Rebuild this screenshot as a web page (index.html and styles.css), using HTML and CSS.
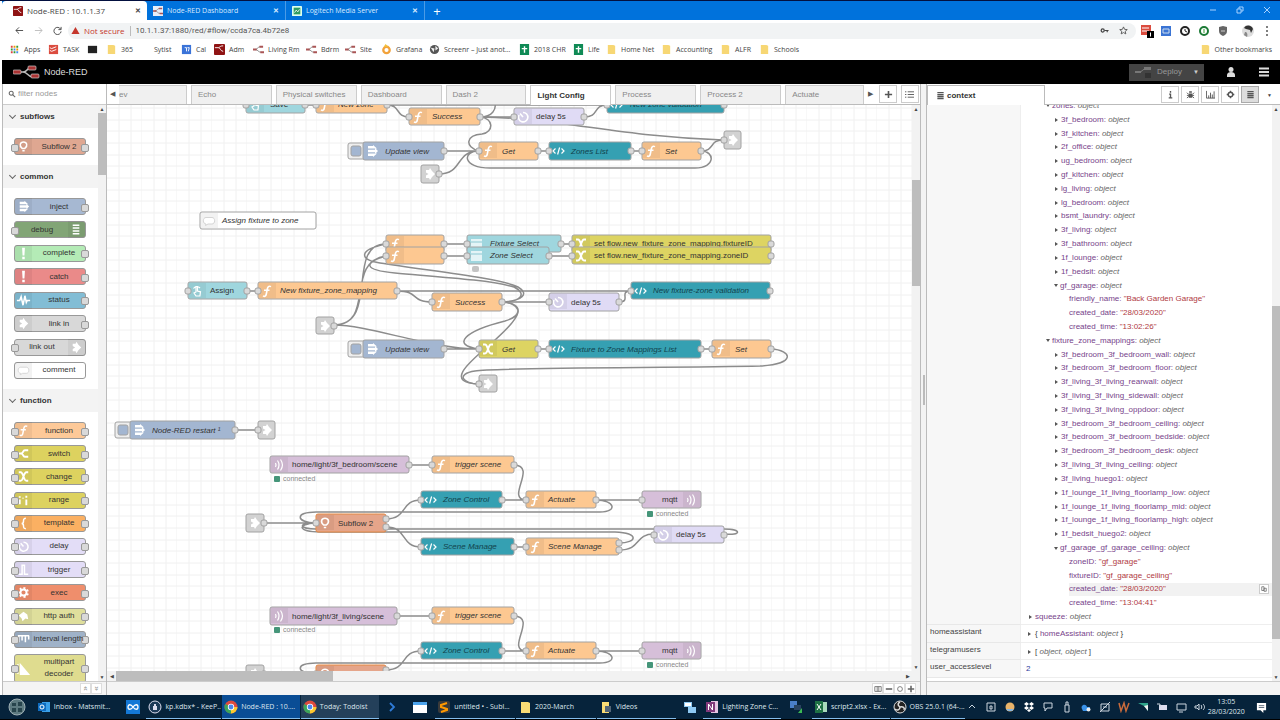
FILE: index.html
```html
<!DOCTYPE html>
<html lang="en">
<head>
<meta charset="utf-8">
<title>Node-RED : 10.1.1.37</title>
<link rel="stylesheet" href="styles.css">
</head>
<body>
<svg class="sprite" aria-hidden="true">
  <defs>
    <symbol id="i-fn" viewBox="0 0 18 18"><path class="s" d="M13 4.600c-2.200-1.100-3.300.1-3.700 2.400L8.300 12c-.4 2.100-1.500 2.900-3.300 1.900M6 8.300h5.500"/></symbol>
    <symbol id="i-tpl" viewBox="0 0 18 18"><path class="s thin" d="M6.500 6.500L4 9l2.500 2.500M12.500 6.500L15 9l-2.500 2.500M10.600 5.500l-2 7"/></symbol>
    <symbol id="i-inject" viewBox="0 0 18 18"><path class="f" d="M5 4h5V3l4 3.500H5zM5 14h5v1l4-3.500H5zM5 7.700h7V6l3 3-3 3v-1.700H5z"/></symbol>
    <symbol id="i-link" viewBox="0 0 18 18"><path class="f" d="M5 5h3l1-2 2 3 3 3-3 3-2 3-1-2H5v-2.500L7.500 9 5 7.500z"/></symbol>
    <symbol id="i-timer" viewBox="0 0 18 18"><path class="s" d="M9 4.500A4.700 4.700 0 1 1 5 7M9 9L6 5.500"/></symbol>
    <symbol id="i-switch" viewBox="0 0 18 18"><path class="s fat" d="M3 9h3.500C9 9 8 5.500 10.500 5.500H14M6.500 9C9 9 8 12.500 10.500 12.500H14"/></symbol>
    <symbol id="i-change" viewBox="0 0 18 18"><path class="s fat" d="M4 4.500h2c3 0 3 9 6 9h2M14 4.500h-2c-3 0-3 9-6 9H4"/></symbol>
    <symbol id="i-range" viewBox="0 0 18 18"><path class="s fat" d="M5 8v5M5 4.500v1.500M12 8v6M12 4v2M8.500 6v1"/></symbol>
    <symbol id="i-brace" viewBox="0 0 18 18"><path class="s" d="M11.500 3.500C9 3.500 9 4.500 9 6.500S8.500 9 7 9c1.500 0 2 .5 2 2.500s0 3 2.500 3"/></symbol>
    <symbol id="i-trigger" viewBox="0 0 18 18"><path class="s" d="M4 14h3.500V4.500H10V14h4"/></symbol>
    <symbol id="i-gear" viewBox="0 0 18 18"><circle class="s fat" cx="9" cy="9" r="3.200"/><path class="s fat" stroke-dasharray="2 2.200" d="M9 4.200a4.800 4.800 0 1 1-.1 0z"/></symbol>
    <symbol id="i-leaf" viewBox="0 0 18 18"><path class="f" d="M4 8l5-4 4 3 1 5-3-1-3 3-1-3z"/></symbol>
    <symbol id="i-ruler" viewBox="0 0 18 18"><path class="s" d="M3 5h12M4 5v7M7.500 5v5M11 5v7M14.500 5v4"/></symbol>
    <symbol id="i-multi" viewBox="0 0 18 18"><path class="f" d="M5 3l11 13H5z"/><path class="s thin" d="M2 5h2M2 8h2M2 11h2M2 14h2"/></symbol>
    <symbol id="i-wave" viewBox="0 0 18 18"><path class="s" d="M2 9h3l1.500-4 2 9 2-10 1.500 7 1-2h3"/></symbol>
    <symbol id="i-bang" viewBox="0 0 18 18"><path class="f" d="M7.500 3h3l-.5 8H8zM7.700 12.500h2.600V15H7.700z"/></symbol>
    <symbol id="i-bars" viewBox="0 0 18 18"><path class="s" d="M5 4.500h7M5 7.500h7M5 10.500h7M5 13.500h7"/></symbol>
    <symbol id="i-comment" viewBox="0 0 18 18"><path d="M6 5.500h6c3.500 0 3.500 6.500 0 6.500H8l-2.500 1.500.5-1.500c-3.500 0-3.500-6.500 0-6.500z" fill="#fff" stroke="#d4d4d4"/></symbol>
    <symbol id="i-bulb" viewBox="0 0 18 18"><path class="s" d="M7.600 11C4 8 5.500 4.200 9 4.200s5 3.800 1.400 6.800zM7.800 13.500h2.400"/></symbol>
    <symbol id="i-touch" viewBox="0 0 18 18"><path class="s thin" d="M8 10V4.500h1.500V9l3 .8-.6 4.200H8l-2-3zM5.500 6.500A4 4 0 0 1 12 6"/></symbol>
    <symbol id="i-list" viewBox="0 0 18 18"><path fill="#e4f4f6" d="M4 4h11v10H4z"/><path fill="#8cc9d2" d="M4 6.500h11v1H4z"/></symbol>
    <symbol id="i-mqtt" viewBox="0 0 18 18"><path class="s thin" d="M7.500 4.500c2 3 2 6 0 9M10.500 3.500c2.500 3.500 2.500 7.500 0 11M5.500 7c.8 1.500.8 2.500 0 4"/></symbol>
    <symbol id="i-nr" viewBox="0 0 12 12"><rect width="12" height="12" rx="1" fill="#8f1313"/><path d="M1 4h4c2 0 2 4 5 4M5 4c2-1 2-2 5-2" fill="none" stroke="#fff"/></symbol>
    <symbol id="i-nrl" viewBox="0 0 12 12"><path d="M2 6c4 0 2-3 6-3M2 6c4 0 3 3 7 3" fill="none" stroke="#888"/><path d="M0 5h4v2H0zM7 2h4v2H7zM8 8h4v2H8z" fill="#a55"/></symbol>
    <symbol id="i-folder" viewBox="0 0 12 12"><path d="M2 1h6l2 1v9H2z" fill="#f7d774"/></symbol>
    <symbol id="i-chrome" viewBox="0 0 14 14"><circle cx="7" cy="7" r="6.500" fill="#dd4b3e"/><path d="M7 7L1.200 4A6.500 6.500 0 0 0 7 13.500l3-5z" fill="#3ba55b"/><path d="M7 7h6.500A6.500 6.500 0 0 1 7 13.500z" fill="#fbc92f"/><circle cx="7" cy="7" r="3.200" fill="#fff"/><circle cx="7" cy="7" r="2.400" fill="#4a88ee"/></symbol>
    <symbol id="i-db" viewBox="0 0 10 10"><path d="M1.500 1h7v1.500h-7zM1.500 3.200h7v1.500h-7zM1.500 5.400h7v1.500h-7zM1.500 7.600h7v1.500h-7z" fill="#555"/></symbol>
    <symbol id="i-sheet" viewBox="0 0 12 12"><path d="M1 0h10v12H1z" fill="#0f8a55"/><path d="M3 5h6M6 2.500v7" stroke="#fff" stroke-width="1.500"/></symbol>
    <rect id="p" class="port" x="-3" y="-3" width="6" height="6" rx="2"/>
    <path id="sh" class="shade" d="M1 1h17v15H1z"/>
    <pattern id="grid" width="35" height="35" patternUnits="userSpaceOnUse"><path d="M12 0v35M24 0v35M35 0v35M0 3h35M0 15h35M0 26h35" fill="none" stroke="#f0f0f0"/></pattern>
  </defs>
</svg>

<div class="tabstrip">
  <button class="btab active"><svg><use href="#i-nr"/></svg><span>Node-RED : 10.1.1.37</span><b>✕</b></button>
  <button class="btab"><svg><rect width="12" height="12" fill="#e8eef8"/><use href="#i-nrl"/></svg><span>Node-RED Dashboard</span><b>✕</b></button>
  <button class="btab"><svg viewBox="0 0 12 12"><rect width="12" height="12" rx="1" fill="#dfe"/><path d="M2 2h8v8H2z" fill="#2f9c62"/><path d="M3 8l2-3 2 2 2-3" stroke="#fff" fill="none"/></svg><span>Logitech Media Server</span><b>✕</b></button>
  <button class="newtab" aria-label="New tab">+</button>
  <span class="grow"></span>
  <span class="winbtns"><button aria-label="Minimise"><svg viewBox="0 0 8 8"><path d="M1 4h6"/></svg></button><button aria-label="Restore"><svg viewBox="0 0 8 8"><path d="M1 3h4v4H1zM3 3V1h4v4H5"/></svg></button><button aria-label="Close"><svg viewBox="0 0 8 8"><path d="M1 1l6 6M7 1L1 7"/></svg></button></span>
</div>

<div class="toolbar">
  <button aria-label="Back"><svg viewBox="0 0 10 10"><path d="M9 5H1M4.500 1.500L1 5l3.500 3.500"/></svg></button>
  <button aria-label="Forward" class="dim"><svg viewBox="0 0 10 10"><path d="M1 5h8M5.500 1.500L9 5 5.500 8.500"/></svg></button>
  <button aria-label="Reload"><svg viewBox="0 0 10 10"><path d="M8.500 3.500A4 4 0 1 0 9 6M9 1v3H6"/></svg></button>
  <div class="omnibox">
    <svg class="warn" viewBox="0 0 10 10"><path d="M5 1l4.500 8h-9z" fill="#c5372c"/></svg>
    <span class="notsecure">Not secure</span>
    <input aria-label="Address" value="10.1.1.37:1880/red/#flow/ccda7ca.4b72e8">
    <svg class="key" viewBox="0 0 10 10"><circle cx="3" cy="5" r="1.700" fill="none" stroke="#444" stroke-width="1.400"/><path d="M5 5h4.500M8 5v2" stroke="#444" stroke-width="1.300"/></svg>
    <svg class="star" viewBox="0 0 10 10"><path d="M5 1l1.200 2.700 3 .3-2.300 1.900.7 2.900L5 7.300 2.400 8.800l.7-2.900L.8 4l3-.3z" fill="none" stroke="#555"/></svg>
  </div>
  <div class="exts">
    <svg viewBox="0 0 14 14"><path d="M1 1h10v10H1z" fill="#db4c3f"/><path d="M2 4h7M2 7h7" stroke="#fff"/><path d="M7 7h7v7H7z"/><path d="M10.500 8.500v4" stroke="#fff"/></svg>
    <svg viewBox="0 0 14 14"><path d="M2 2h10v10H2z" fill="#3b74d4"/><path d="M4 5h6v4H4z" fill="none" stroke="#cde"/></svg>
    <svg viewBox="0 0 14 14"><circle cx="7" cy="7" r="4" fill="#fff" stroke="#222" stroke-width="2"/><path d="M7 5v2l2 1" stroke="#222" fill="none"/></svg>
    <svg viewBox="0 0 14 14"><circle cx="7" cy="7" r="4" fill="#fff" stroke="#1c7a35" stroke-width="2"/><path d="M6 5h2v4H6z" fill="#9c9"/></svg>
    <svg viewBox="0 0 14 14"><path d="M3 3l4-1 4 1v4c0 3-2 4-4 5-2-1-4-2-4-5z" fill="#666"/><path d="M5 7h4" stroke="#ccc"/></svg>
    <svg class="avatar" viewBox="0 0 14 14"><circle cx="7" cy="7" r="6" fill="#ddd"/><path d="M3 4c2-4 8-3 9 1l-2 4-1-3-4-1z" fill="#333"/><path d="M4 8c2 0 3 2 2 5L3 11z" fill="#888"/></svg>
    <svg viewBox="0 0 14 14"><path d="M7 2v2M7 6v2M7 10v2" stroke="#555" stroke-width="1.500"/></svg>
  </div>
</div>

<nav class="bookmarks">
  <a href="#" class="w39"><svg viewBox="0 0 12 12"><path d="M2 2h2v2H2zM2 8h2v2H2z" fill="#d44"/><path d="M5 2h2v2H5zM8 5h2v2H8z" fill="#e90"/><path d="M8 2h2v2H8zM2 5h2v2H2zM5 8h2v2H5z" fill="#393"/><path d="M5 5h2v2H5zM8 8h2v2H8z" fill="#48e"/></svg>Apps</a>
  <a href="#" class="w39"><svg viewBox="0 0 12 12"><path d="M1 1h10v10H1z" fill="#db4c3f"/><path d="M2 4l2 1 5-2M2 7l2 1 5-2" stroke="#fff" fill="none"/></svg>TASK</a>
  <a href="#" class="w19" aria-label="Terminal"><svg viewBox="0 0 12 12"><path d="M1 2h10v8H1z" fill="#222"/></svg></a>
  <a href="#" class="w48"><svg><use href="#i-folder"/></svg>365</a>
  <a href="#" class="w27">Sytist</a>
  <a href="#" class="w33"><svg viewBox="0 0 12 12"><path d="M1 1h10v10H1z" fill="#3a73d8"/><path d="M4 4h2v4M7 4h2L8 8" stroke="#fff" fill="none"/></svg>Cal</a>
  <a href="#" class="w39"><svg><use href="#i-nr"/></svg>Adm</a>
  <a href="#" class="w53"><svg><use href="#i-nrl"/></svg>Living Rm</a>
  <a href="#" class="w39"><svg><use href="#i-nrl"/></svg>Bdrm</a>
  <a href="#" class="w36"><svg><use href="#i-nrl"/></svg>Site</a>
  <a href="#" class="w48"><svg viewBox="0 0 12 12"><circle cx="6" cy="6.500" r="3.500" fill="none" stroke="#f2a23a" stroke-width="2.500"/><path d="M5 0l3 3H3z" fill="#f2c23a"/></svg>Grafana</a>
  <a href="#" class="w90"><svg viewBox="0 0 12 12"><circle cx="6" cy="6" r="5" fill="#555"/><path d="M2 4l4 1-1 4zM7 2l3 3-3 2z" fill="#eee"/></svg>Screenr – Just anot...</a>
  <a href="#" class="w54"><svg><use href="#i-sheet"/></svg>2018 CHR</a>
  <a href="#" class="w33"><svg><use href="#i-sheet"/></svg>Life</a>
  <a href="#" class="w55"><svg><use href="#i-folder"/></svg>Home Net</a>
  <a href="#" class="w59"><svg><use href="#i-folder"/></svg>Accounting</a>
  <a href="#" class="w39"><svg><use href="#i-folder"/></svg>ALFR</a>
  <a href="#"><svg><use href="#i-folder"/></svg>Schools</a>
  <span class="grow"></span>
  <a href="#"><svg><use href="#i-folder"/></svg>Other bookmarks</a>
</nav>

<header class="nrhead">
  <svg class="logo" viewBox="0 0 27 14"><path d="M4 7h6c5 0 3-4 8-4M10 7c5 0 4 5 10 5" fill="none" stroke="#bbb" stroke-width="1.500"/><g fill="#a33" stroke="#ccc" stroke-width=".7"><rect x="0" y="5" width="8" height="4" rx="1"/><rect x="15" y="1" width="8" height="4" rx="1"/><rect x="18" y="9" width="8" height="4" rx="1"/></g></svg>
  <span class="brand">Node-RED</span>
  <span class="grow"></span>
  <button class="deploy"><svg viewBox="0 0 18 12"><path d="M4 6c5 0 4-3 8-3" fill="none" stroke="#888"/><path d="M1 5h6v2H1zM10 1h7v3h-7z" fill="#777"/><path d="M11 7h6v5h-6z" fill="#333"/></svg>Deploy<i>▼</i></button>
  <button class="hbtn" aria-label="User"><svg viewBox="0 0 10 12"><circle cx="5" cy="3.500" r="2.500"/><path d="M1 11V9c0-4 8-4 8 0v2z"/></svg></button>
  <button class="hbtn" aria-label="Menu"><svg viewBox="0 0 12 12"><path d="M1 1.500h10v2H1zM1 5h10v2H1zM1 8.500h10v2H1z"/></svg></button>
</header>

<main class="editor">
  <aside class="palette">
    <div class="search"><svg viewBox="0 0 10 10"><circle cx="4" cy="4" r="2.500" fill="none" stroke="#666" stroke-width="1.300"/><path d="M6 6l3 3" stroke="#666" stroke-width="1.300"/></svg><input aria-label="filter nodes" placeholder="filter nodes"></div>
    <div class="palbody">
      <div class="cats">
        <h2>subflows</h2>
        <ul class="one"><li class="subflow in out"><svg><use href="#i-bulb"/></svg><span>Subflow 2</span></li></ul>
        <h2>common</h2>
        <ul class="common">
          <li class="inject out"><svg><use href="#i-inject"/></svg><span>inject</span></li>
          <li class="debug in rev"><svg><use href="#i-bars"/></svg><span>debug</span></li>
          <li class="complete out"><svg><use href="#i-bang"/></svg><span>complete</span></li>
          <li class="catch out"><svg><use href="#i-bang"/></svg><span>catch</span></li>
          <li class="status out"><svg><use href="#i-wave"/></svg><span>status</span></li>
          <li class="link out"><svg><use href="#i-link"/></svg><span>link in</span></li>
          <li class="link in rev"><svg><use href="#i-link"/></svg><span>link out</span></li>
          <li class="comment"><svg><use href="#i-comment"/></svg><span>comment</span></li>
        </ul>
        <h2>function</h2>
        <ul class="function">
          <li class="fn in out"><svg><use href="#i-fn"/></svg><span>function</span></li>
          <li class="change in out"><svg><use href="#i-switch"/></svg><span>switch</span></li>
          <li class="change in out"><svg><use href="#i-change"/></svg><span>change</span></li>
          <li class="change in out"><svg><use href="#i-range"/></svg><span>range</span></li>
          <li class="template in out"><svg><use href="#i-brace"/></svg><span>template</span></li>
          <li class="delay in out"><svg><use href="#i-timer"/></svg><span>delay</span></li>
          <li class="delay in out"><svg><use href="#i-trigger"/></svg><span>trigger</span></li>
          <li class="exec in out"><svg><use href="#i-gear"/></svg><span>exec</span></li>
          <li class="auth in out"><svg><use href="#i-leaf"/></svg><span>http auth</span></li>
          <li class="interval in out"><svg><use href="#i-ruler"/></svg><span>interval length</span></li>
          <li class="multi in out"><svg><use href="#i-multi"/></svg><span>multipart decoder</span></li>
        </ul>
      </div>
      <div class="vscroll"><i>▲</i><b class="t-pal"></b><i>▼</i></div>
    </div>
    <div class="foot end"><button aria-label="Collapse all">«</button><button aria-label="Expand all">»</button></div>
  </aside>

  <section class="workspace">
    <div class="wtabs">
      <button class="arrow" aria-label="Scroll left">◀</button>
      <button class="wtab first">ev</button><button class="wtab">Echo</button><button class="wtab">Physical switches</button><button class="wtab">Dashboard</button><button class="wtab">Dash 2</button><button class="wtab on">Light Config</button><button class="wtab">Process</button><button class="wtab">Process 2</button><button class="wtab last">Actuate</button>
      <button class="arrow r" aria-label="Scroll right">▶</button>
      <button class="sq" aria-label="Add flow"><svg viewBox="0 0 10 10"><path d="M1 5h8M5 1v8" stroke="#555" stroke-width="1.800"/></svg></button>
      <button class="sq" aria-label="List flows"><svg viewBox="0 0 10 10"><path d="M0 2h1.500M3 2h7M0 5h1.500M3 5h7M0 8h1.500M3 8h7" stroke="#555"/></svg></button>
    </div>
    <div class="canvaswrap">
      <svg class="canvas" role="img" aria-label="Light Config flow">
        <rect width="100%" height="100%" fill="url(#grid)"/>
        <g transform="translate(-107 -105)">
          <g class="wires">
            <path d="M305 105H316M387 105H607M387 105C401 105 395 117 409 117M480 117H514M480 117C492 117 497 110 495 100"/>
            <path d="M480 117C494 118 494 132 482 134C466 135 464 147 479 151M480 117C560 118 620 137 723 140M584 117C600 117 592 105 607 105"/>
            <path d="M444 151H479M439 174C463 174 455 151 479 151M538 151H549M631 151H642M701 151C715 151 709 140 723 140M701 151C715 151 716 168 695 168H490C462 168 462 151 479 151"/>
            <path d="M247 291H258M397 291H631M397 291C420 291 410 302 432 302M502 302H549M619 302C632 302 618 291 631 291M444 244H467M444 256H467M561 244H572M549 256H572"/>
            <path d="M334 325C380 325 345 244 386 244M334 325C376 325 344 262 386 256M386 244C357 250 360 260 380 263C430 271 500 278 518 287C530 294 522 301 502 302M386 256C364 262 362 270 395 273C440 277 490 280 514 287C528 294 520 302 502 302"/>
            <path d="M502 302C526 304 523 315 495 340C475 358 440 383 479 384M502 302C520 303 525 315 505 321C465 331 450 345 479 349M334 325C370 325 430 349 479 349M444 349H479M538 349H549M701 349H712"/>
            <path d="M771 349C792 350 797 364 760 366C680 368 500 367 475 371C455 374 463 384 479 384M235 430H258M397 616H409"/>
            <g id="scene-wires"><path d="M409 465H432M514 465C538 466 505 499 526 500M502 500H526M596 500H642M596 500C615 500 618 512 600 512H316C295 512 295 522 316 523M264 523H316M386 519C408 519 400 500 421 500M386 527C408 527 400 547 421 547M514 547H526M619 543C637 543 640 533 615 532H320C298 532 296 524 316 523M724 534C742 536 742 529 724 529H316C300 529 296 523 316 523M619 550C642 550 634 534 654 534"/></g>
            <use href="#scene-wires" y="151"/>
          </g>

          <g class="node ui" transform="translate(246 96)"><rect class="box" width="59" height="17" rx="2"/><use href="#sh"/><use href="#i-touch" width="18" height="18"/><text x="24" y="11">Save</text><use href="#p" y="9"/><use href="#p" x="59" y="9"/></g>
          <g class="node fn it" transform="translate(316 96)"><rect class="box" width="71" height="17" rx="2"/><use href="#sh"/><use href="#i-fn" width="18" height="18"/><text x="22" y="11">New zone</text><use href="#p" y="9"/><use href="#p" x="71" y="9"/></g>
          <g class="node fn it" transform="translate(409 108)"><rect class="box" width="71" height="17" rx="2"/><use href="#sh"/><use href="#i-fn" width="18" height="18"/><text x="23" y="11">Success</text><use href="#p" y="9"/><use href="#p" x="71" y="9"/></g>
          <g class="node delay" transform="translate(514 108)"><rect class="box" width="70" height="17" rx="2"/><use href="#sh"/><use href="#i-timer" width="18" height="18"/><text x="22" y="11">delay 5s</text><use href="#p" y="9"/><use href="#p" x="70" y="9"/></g>
          <g class="node tpl it" transform="translate(607 96)"><rect class="box" width="117" height="17" rx="2"/><use href="#i-tpl" width="18" height="18"/><text x="23" y="11">New zone validation</text><use href="#p" y="9"/><use href="#p" x="117" y="9"/></g>
          <g class="node link" transform="translate(724 131)"><rect class="box" width="17" height="18" rx="2"/><use href="#i-link" width="18" height="18"/><use href="#p" y="9"/></g>

          <g class="node inject it" transform="translate(363 142)"><rect class="tray" x="-15" y="1" width="20" height="16" rx="2"/><rect class="box" x="-12" y="4" width="10" height="10" rx="2"/><rect class="box" width="81" height="18" rx="2"/><use href="#i-inject" width="18" height="18"/><text x="22" y="12">Update view</text><use href="#p" x="81" y="9"/></g>
          <g class="node fn it" transform="translate(479 142)"><rect class="box" width="59" height="18" rx="2"/><use href="#sh"/><use href="#i-fn" width="18" height="18"/><text x="23" y="12">Get</text><use href="#p" y="9"/><use href="#p" x="59" y="9"/></g>
          <g class="node tpl it" transform="translate(549 142)"><rect class="box" width="82" height="18" rx="2"/><use href="#i-tpl" width="18" height="18"/><text x="22" y="12">Zones List</text><use href="#p" y="9"/><use href="#p" x="82" y="9"/></g>
          <g class="node fn it" transform="translate(642 142)"><rect class="box" width="59" height="18" rx="2"/><use href="#sh"/><use href="#i-fn" width="18" height="18"/><text x="23" y="12">Set</text><use href="#p" y="9"/><use href="#p" x="59" y="9"/></g>
          <g class="node link" transform="translate(421 165)"><rect class="box" width="18" height="18" rx="2"/><use href="#i-link" width="18" height="18"/><use href="#p" x="18" y="9"/></g>
          <g class="node comment it" transform="translate(200 212)"><rect class="box" width="116" height="17" rx="2"/><use href="#sh"/><use href="#i-comment" width="18" height="18"/><text x="22" y="11">Assign fixture to zone</text></g>

          <g class="node fn" transform="translate(386 235)"><rect class="box" width="58" height="17" rx="2"/><use href="#sh"/><use href="#i-fn" width="18" height="18"/><use href="#p" y="9"/><use href="#p" x="58" y="9"/></g>
          <g class="node fn" transform="translate(386 247)"><rect class="box" width="58" height="17" rx="2"/><use href="#sh"/><use href="#i-fn" width="18" height="18"/><use href="#p" y="9"/><use href="#p" x="58" y="9"/></g>
          <g class="node ui it" transform="translate(467 235)"><rect class="box" width="94" height="17" rx="2"/><use href="#i-list" width="18" height="18"/><text x="23" y="11">Fixture Select</text><use href="#p" y="9"/><use href="#p" x="94" y="9"/></g>
          <g class="node ui it" transform="translate(467 247)"><rect class="box" width="82" height="17" rx="2"/><use href="#i-list" width="18" height="18"/><text x="23" y="11">Zone Select</text><use href="#p" y="9"/><use href="#p" x="82" y="9"/></g>
          <rect x="472" y="266" width="7" height="6" rx="2" fill="#c4c4c4"/>
          <g class="node change" transform="translate(572 235)"><rect class="box" width="199" height="17" rx="2"/><use href="#sh"/><use href="#i-change" width="18" height="18"/><text x="22" y="11">set flow.new_fixture_zone_mapping.fixtureID</text><use href="#p" y="9"/><use href="#p" x="199" y="9"/></g>
          <g class="node change" transform="translate(572 247)"><rect class="box" width="199" height="17" rx="2"/><use href="#sh"/><use href="#i-change" width="18" height="18"/><text x="22" y="11">set flow.new_fixture_zone_mapping.zoneID</text><use href="#p" y="9"/><use href="#p" x="199" y="9"/></g>

          <g class="node ui" transform="translate(188 282)"><rect class="box" width="59" height="17" rx="2"/><use href="#sh"/><use href="#i-touch" width="18" height="18"/><text x="22" y="11">Assign</text><use href="#p" y="9"/><use href="#p" x="59" y="9"/></g>
          <g class="node fn it" transform="translate(258 282)"><rect class="box" width="139" height="17" rx="2"/><use href="#sh"/><use href="#i-fn" width="18" height="18"/><text x="22" y="11">New fixture_zone_mapping</text><use href="#p" y="9"/><use href="#p" x="139" y="9"/></g>
          <g class="node fn it" transform="translate(432 293)"><rect class="box" width="70" height="18" rx="2"/><use href="#sh"/><use href="#i-fn" width="18" height="18"/><text x="23" y="12">Success</text><use href="#p" y="9"/><use href="#p" x="70" y="9"/></g>
          <g class="node delay" transform="translate(549 293)"><rect class="box" width="70" height="18" rx="2"/><use href="#sh"/><use href="#i-timer" width="18" height="18"/><text x="22" y="12">delay 5s</text><use href="#p" y="9"/><use href="#p" x="70" y="9"/></g>
          <g class="node tpl it" transform="translate(631 282)"><rect class="box" width="139" height="17" rx="2"/><use href="#i-tpl" width="18" height="18"/><text x="22" y="11">New fixture-zone validation</text><use href="#p" y="9"/><use href="#p" x="139" y="9"/></g>
          <g class="node link" transform="translate(316 317)"><rect class="box" width="18" height="17" rx="2"/><use href="#i-link" width="18" height="18"/><use href="#p" x="18" y="9"/></g>

          <g class="node inject it" transform="translate(363 340)"><rect class="tray" x="-15" y="1" width="20" height="16" rx="2"/><rect class="box" x="-12" y="4" width="10" height="10" rx="2"/><rect class="box" width="81" height="18" rx="2"/><use href="#i-inject" width="18" height="18"/><text x="22" y="12">Update view</text><use href="#p" x="81" y="9"/></g>
          <g class="node change it" transform="translate(479 340)"><rect class="box" width="59" height="18" rx="2"/><use href="#sh"/><use href="#i-change" width="18" height="18"/><text x="23" y="12">Get</text><use href="#p" y="9"/><use href="#p" x="59" y="9"/></g>
          <g class="node tpl it" transform="translate(549 340)"><rect class="box" width="152" height="18" rx="2"/><use href="#i-tpl" width="18" height="18"/><text x="22" y="12">Fixture to Zone Mappings List</text><use href="#p" y="9"/><use href="#p" x="152" y="9"/></g>
          <g class="node fn it" transform="translate(712 340)"><rect class="box" width="59" height="18" rx="2"/><use href="#sh"/><use href="#i-fn" width="18" height="18"/><text x="23" y="12">Set</text><use href="#p" y="9"/><use href="#p" x="59" y="9"/></g>
          <g class="node link" transform="translate(479 375)"><rect class="box" width="18" height="17" rx="2"/><use href="#i-link" width="18" height="18"/><use href="#p" y="9"/></g>

          <g class="node inject it" transform="translate(130 421)"><rect class="tray" x="-15" y="1" width="20" height="16" rx="2"/><rect class="box" x="-12" y="4" width="10" height="10" rx="2"/><rect class="box" width="105" height="18" rx="2"/><use href="#i-inject" width="18" height="18"/><text x="22" y="12">Node-RED restart ¹</text><use href="#p" x="105" y="9"/></g>
          <g class="node link" transform="translate(258 421)"><rect class="box" width="17" height="18" rx="2"/><use href="#i-link" width="18" height="18"/><use href="#p" y="9"/></g>

          <g class="node mqtt" transform="translate(270 456)"><rect class="box" width="139" height="17" rx="2"/><use href="#sh"/><use href="#i-mqtt" width="18" height="18"/><text x="22" y="11">home/light/3f_bedroom/scene</text><use href="#p" x="139" y="9"/></g>
          <g class="node mqtt" transform="translate(270 607)"><rect class="box" width="127" height="18" rx="2"/><use href="#sh"/><use href="#i-mqtt" width="18" height="18"/><text x="22" y="12">home/light/3f_living/scene</text><use href="#p" x="127" y="9"/></g>
          <g id="scene">
            <g class="stat"><rect x="274" y="476" width="6" height="6" rx="1"/><text x="283" y="481">connected</text><rect x="647" y="511" width="6" height="6" rx="1"/><text x="656" y="516">connected</text></g>
            <g class="node fn it" transform="translate(432 456)"><rect class="box" width="82" height="17" rx="2"/><use href="#sh"/><use href="#i-fn" width="18" height="18"/><text x="23" y="11">trigger scene</text><use href="#p" y="9"/><use href="#p" x="82" y="9"/></g>
            <g class="node tpl it" transform="translate(421 491)"><rect class="box" width="81" height="17" rx="2"/><use href="#i-tpl" width="18" height="18"/><text x="22" y="11">Zone Control</text><use href="#p" y="9"/><use href="#p" x="81" y="9"/></g>
            <g class="node fn it" transform="translate(526 491)"><rect class="box" width="70" height="17" rx="2"/><use href="#sh"/><use href="#i-fn" width="18" height="18"/><text x="22" y="11">Actuate</text><use href="#p" y="9"/><use href="#p" x="70" y="9"/></g>
            <g class="node mqtt" transform="translate(642 491)"><rect class="box" width="59" height="17" rx="2"/><use href="#sh" x="40"/><use href="#i-mqtt" x="40" width="18" height="18"/><text x="20" y="11">mqtt</text><use href="#p" y="9"/></g>
            <g class="node link" transform="translate(246 514)"><rect class="box" width="18" height="18" rx="2"/><use href="#i-link" width="18" height="18"/><use href="#p" x="18" y="9"/></g>
            <g class="node subflow" transform="translate(316 514)"><rect class="box" width="70" height="18" rx="2"/><use href="#sh"/><use href="#i-bulb" width="18" height="18"/><text x="22" y="12">Subflow 2</text><use href="#p" y="9"/><use href="#p" x="70" y="5"/><use href="#p" x="70" y="13"/></g>
            <g class="node tpl it" transform="translate(421 538)"><rect class="box" width="93" height="17" rx="2"/><use href="#i-tpl" width="18" height="18"/><text x="22" y="11">Scene Manage</text><use href="#p" y="9"/><use href="#p" x="93" y="9"/></g>
            <g class="node fn it" transform="translate(526 538)"><rect class="box" width="93" height="17" rx="2"/><use href="#sh"/><use href="#i-fn" width="18" height="18"/><text x="22" y="11">Scene Manage</text><use href="#p" y="9"/><use href="#p" x="93" y="5"/><use href="#p" x="93" y="12"/></g>
            <g class="node delay" transform="translate(654 526)"><rect class="box" width="70" height="17" rx="2"/><use href="#sh"/><use href="#i-timer" width="18" height="18"/><text x="22" y="11">delay 5s</text><use href="#p" y="9"/><use href="#p" x="70" y="9"/></g>
          </g>
          <use href="#scene" y="151"/>
        </g>
      </svg>
      <div class="vscroll"><i>▲</i><b class="t-ws"></b><i>▼</i></div>
    </div>
    <div class="hscroll"><i>◀</i><b></b><span class="grow"></span><i>▶</i></div>
    <div class="foot end"><button aria-label="Navigator"><svg viewBox="0 0 10 10"><path d="M1 2h8v6H1zM4 2v6M6 2v6"/></svg></button><button aria-label="Zoom out"><svg viewBox="0 0 10 10"><path d="M1 5h8" stroke-width="2"/></svg></button><button aria-label="Reset zoom"><svg viewBox="0 0 10 10"><circle cx="5" cy="5" r="3"/></svg></button><button aria-label="Zoom in"><svg viewBox="0 0 10 10"><path d="M1 5h8M5 1v8" stroke-width="2"/></svg></button></div>
  </section>

  <div class="splitter"><b></b></div>

  <aside class="sidebar">
    <div class="stabs">
      <button class="stab"><svg><use href="#i-db"/></svg>context</button>
      <span class="grow"></span>
      <button class="sq" aria-label="Info"><svg viewBox="0 0 10 10"><path d="M5 1v2M3.500 4.500H5v4M3 8.700h4" fill="none" stroke="#555" stroke-width="1.500"/></svg></button>
      <button class="sq" aria-label="Debug"><svg viewBox="0 0 10 10"><path d="M3 4h4v4.500H3zM3.500 1.500h3V3h-3z" fill="#555"/><path d="M1 3l2 2M9 3L7 5M1 6h8M1 9l2-2M9 9L7 7" stroke="#555"/></svg></button>
      <button class="sq" aria-label="Dashboard"><svg viewBox="0 0 10 10"><path d="M.5 1v8H10M3 9V6M5 9V3M7 9V5M9 9V1.500" fill="none" stroke="#555"/></svg></button>
      <button class="sq" aria-label="Configuration"><svg viewBox="0 0 10 10"><circle cx="5" cy="5" r="2.500" fill="none" stroke="#555" stroke-width="1.600"/><path d="M5 .8v1.500M5 7.700v1.500M.8 5h1.500M7.700 5h1.500" stroke="#555" stroke-width="1.500"/></svg></button>
      <button class="sq sel" aria-label="Context"><svg><use href="#i-db"/></svg></button>
      <button class="more" aria-label="More">▼</button>
    </div>
    <div class="sidebody">
      <dl class="ctx">
        <dt></dt>
        <dd><ul class="tree">
          <li class="l1 open"><i></i>zones: <em>object</em></li>
          <li class="l2"><i></i>3f_bedroom: <em>object</em></li>
          <li class="l2"><i></i>3f_kitchen: <em>object</em></li>
          <li class="l2"><i></i>2f_office: <em>object</em></li>
          <li class="l2"><i></i>ug_bedroom: <em>object</em></li>
          <li class="l2"><i></i>gf_kitchen: <em>object</em></li>
          <li class="l2"><i></i>lg_living: <em>object</em></li>
          <li class="l2"><i></i>lg_bedroom: <em>object</em></li>
          <li class="l2"><i></i>bsmt_laundry: <em>object</em></li>
          <li class="l2"><i></i>3f_living: <em>object</em></li>
          <li class="l2"><i></i>3f_bathroom: <em>object</em></li>
          <li class="l2"><i></i>1f_lounge: <em>object</em></li>
          <li class="l2"><i></i>1f_bedsit: <em>object</em></li>
          <li class="l2 open"><i></i>gf_garage: <em>object</em></li>
          <li class="l3">friendly_name: <q>Back Garden Garage</q></li>
          <li class="l3">created_date: <q>28/03/2020</q></li>
          <li class="l3">created_time: <q>13:02:26</q></li>
          <li class="l1 open"><i></i>fixture_zone_mappings: <em>object</em></li>
          <li class="l2"><i></i>3f_bedroom_3f_bedroom_wall: <em>object</em></li>
          <li class="l2"><i></i>3f_bedroom_3f_bedroom_floor: <em>object</em></li>
          <li class="l2"><i></i>3f_living_3f_living_rearwall: <em>object</em></li>
          <li class="l2"><i></i>3f_living_3f_living_sidewall: <em>object</em></li>
          <li class="l2"><i></i>3f_living_3f_living_oppdoor: <em>object</em></li>
          <li class="l2"><i></i>3f_bedroom_3f_bedroom_ceiling: <em>object</em></li>
          <li class="l2"><i></i>3f_bedroom_3f_bedroom_bedside: <em>object</em></li>
          <li class="l2"><i></i>3f_bedroom_3f_bedroom_desk: <em>object</em></li>
          <li class="l2"><i></i>3f_living_3f_living_ceiling: <em>object</em></li>
          <li class="l2"><i></i>3f_living_huego1: <em>object</em></li>
          <li class="l2"><i></i>1f_lounge_1f_living_floorlamp_low: <em>object</em></li>
          <li class="l2"><i></i>1f_lounge_1f_living_floorlamp_mid: <em>object</em></li>
          <li class="l2"><i></i>1f_lounge_1f_living_floorlamp_high: <em>object</em></li>
          <li class="l2"><i></i>1f_bedsit_huego2: <em>object</em></li>
          <li class="l2 open"><i></i>gf_garage_gf_garage_ceiling: <em>object</em></li>
          <li class="l3">zoneID: <q>gf_garage</q></li>
          <li class="l3">fixtureID: <q>gf_garage_ceiling</q></li>
          <li class="l3 hover">created_date: <q>28/03/2020</q><button aria-label="Copy value"><svg viewBox="0 0 8 8"><path d="M1 1h3v5H1zM4 3h3v4H4z" fill="none" stroke="#666"/></svg></button></li>
          <li class="l3">created_time: <q>13:04:41</q></li>
          <li class="l0"><i></i>squeeze: <em>object</em></li>
        </ul></dd>
        <dt>homeassistant</dt><dd class="val"><i></i><s>{</s> homeAssistant: <em>object</em> <s>}</s></dd>
        <dt>telegramusers</dt><dd class="val"><i></i><s>[</s> <em>object, object</em> <s>]</s></dd>
        <dt>user_accesslevel</dt><dd class="val num">2</dd>
      </dl>
      <div class="vscroll"><i>▲</i><b class="t-side"></b><i>▼</i></div>
    </div>
    <div class="foot"></div>
  </aside>
</main>

<footer class="taskbar">
  <button class="start" aria-label="Start"><svg viewBox="0 0 18 18"><circle cx="9" cy="9" r="8" fill="#5d7a80" stroke="#9fb0b5"/><path d="M4 5h4v3H4zM10 4h4v4h-4zM4 10h4v4H4zM10 10h4v4h-4z" fill="#27444c"/></svg></button>
  <button class="task w85"><svg viewBox="0 0 14 14"><path d="M5 2h8v10H5z" fill="#3aa0e8"/><path d="M1 3h8v8H1z" fill="#0f6cbf"/><circle cx="5" cy="7" r="2" fill="none" stroke="#fff"/></svg>Inbox - Matsmit...</button>
  <button class="task icon w25" aria-label="Arduino"><svg viewBox="0 0 14 14"><rect width="14" height="14" fill="#1478d6"/><path d="M7 7C5 4 2 4 2 7s3 3 5 0 5-3 5 0-3 3-5 0z" fill="none" stroke="#fff" stroke-width="1.300"/></svg></button>
  <button class="task run w75"><svg viewBox="0 0 14 14"><circle cx="7" cy="7" r="6" fill="#1d3a58" stroke="#dde"/><path d="M5 6h4v4H5zM6 6V4h2v2" fill="#dde"/></svg>kp.kdbx* - KeeP...</button>
  <button class="task run cur w78"><svg><use href="#i-chrome"/></svg>Node-RED : 10....</button>
  <button class="task run alt w78"><svg><use href="#i-chrome"/></svg>Today: Todoist</button>
  <button class="task icon w25" aria-label="Prompt"><svg viewBox="0 0 14 14"><path d="M5 3l4 4-4 4" fill="none" stroke="#2f7cd8" stroke-width="1.800"/></svg></button>
  <button class="task icon w29" aria-label="Explorer"><svg viewBox="0 0 14 14"><path d="M0 2h14v11H0z" fill="#fff"/><path d="M0 2h14v3H0z" fill="#4ba3ec"/></svg></button>
  <button class="task run w80"><svg viewBox="0 0 14 14"><rect x="1" y="1" width="12" height="12" rx="2" fill="#3a3a3a"/><path d="M10 3L4 5v2l6 2v1l-6 2" fill="none" stroke="#f90" stroke-width="2"/></svg>untitled • - Subl...</button>
  <button class="task run w80"><svg viewBox="0 0 14 14"><path d="M3 2h7l2 1v10H3z" fill="#f9dc75"/></svg>2020-March</button>
  <button class="task run w80"><svg viewBox="0 0 14 14"><path d="M3 2h7v11H3z" fill="#f9dc75"/><path d="M6 6h6v6H6z" fill="#567"/></svg>Videos</button>
  <button class="task icon w25" aria-label="Remote"><svg viewBox="0 0 14 14"><path d="M1 2h8v5H1zM5 7h8v6H5z" fill="#8ec9f2"/><path d="M2 3h6v3H2z" fill="#fff"/></svg></button>
  <button class="task run w78"><svg viewBox="0 0 14 14"><path d="M6 1h7v12H6z" fill="#e5c5e2"/><path d="M1 2h9v10H1z" fill="#80397b"/><path d="M3.500 10V4l4 6V4" stroke="#fff" fill="none"/></svg>Lighting Zone C...</button>
  <button class="task icon w29" aria-label="VNC"><svg viewBox="0 0 14 14"><path d="M1 1h7v7H1z" fill="#4a7fc8"/><path d="M5 5h7v5H5z" fill="#29435f"/><path d="M9 13h4V8z" fill="#3cba54"/></svg></button>
  <button class="task run w78"><svg viewBox="0 0 14 14"><path d="M6 2h7v10H6z" fill="#a9dbbd"/><path d="M1 1h8v12H1z" fill="#1e7145"/><path d="M3 4l4 6M7 4l-4 6" stroke="#fff"/></svg>script2.xlsx - Ex...</button>
  <button class="task run w75"><svg viewBox="0 0 14 14"><circle cx="7" cy="7" r="6" fill="#222" stroke="#ddd"/><path d="M7 7c-3-2-2-4 0-5M7 7c3-1 5 1 4 3M7 7c0 3-3 4-5 2" fill="none" stroke="#ddd" stroke-width="1.500"/></svg>OBS 25.0.1 (64-...</button>
  <span class="grow"></span>
  <div class="tray-icons">
    <svg viewBox="0 0 12 12"><path class="o" d="M3 7l3-3 3 3"/></svg>
    <svg viewBox="0 0 12 12"><path class="o" d="M2 2h8v8H2zM5 5h2v3H5z"/></svg>
    <svg viewBox="0 0 12 12"><circle cx="6" cy="6" r="4.500" fill="#e8b36a"/><path d="M2 8h8l-2 2H4z" fill="#88b5dd"/></svg>
    <svg viewBox="0 0 12 12"><path d="M3.500 1L6 3 3.500 5 1 3zM8.500 1L11 3 8.500 5 6 3zM3.500 5L6 7 3.500 9 1 7zM8.500 5L11 7 8.500 9 6 7zM6 8l2 1.500L6 11 4 9.500z" fill="#fff"/></svg>
    <svg viewBox="0 0 12 12"><path class="o" d="M2 2h8v5H5L3 10V7H2z"/></svg>
    <svg viewBox="0 0 12 12"><path class="o" d="M4 4h4v7H4zM5 4V1h2v3"/></svg>
    <svg viewBox="0 0 12 12"><path d="M2 8c-2-4 4-6 5-2h3v4H3z" fill="#3a92e8"/><circle cx="8.500" cy="8.500" r="2" fill="#eee"/></svg>
    <svg viewBox="0 0 12 12"><path class="o" d="M2 3h8v7H2zM1 11L11 1M4 6h4"/></svg>
    <svg viewBox="0 0 12 12"><path d="M1 2l2 8 3-8 2 8 3-8" fill="none" stroke="#c86b3c" stroke-width="1.500"/></svg>
    <svg viewBox="0 0 12 12"><path d="M1 2h10v8L7 5z" fill="#2fa58b"/><path d="M7 5l4-1v6z" fill="#eee"/></svg>
    <svg viewBox="0 0 12 12"><path d="M3 4h8v5H3z" fill="#dde"/><path class="o" d="M1 3h3v3"/></svg>
    <svg viewBox="0 0 12 12"><path class="o" d="M2 3h9v6H2zM4 11h4"/></svg>
    <svg viewBox="0 0 12 12"><path class="o" d="M1 5h2l2-2v6L3 7H1zM7 4c1 1 1 3 0 4M9 3c2 2 2 4 0 6"/></svg>
  </div>
  <div class="clock"><span>13:05</span><span>28/03/2020</span></div>
  <button class="notify" aria-label="Notifications"><svg viewBox="0 0 12 12"><path d="M1 1h10v8H8v3L5 9H1z" fill="#fff"/><path d="M3 4h6M3 6h6" stroke="#567"/></svg></button>
</footer>
</body>
</html>
```
FILE: styles.css
```css
* { box-sizing: border-box; }
html, body { height: 100%; }
body {
  margin: 0;
  display: flex;
  flex-direction: column;
  overflow: hidden;
  background: #fff;
  border-top: 1px solid #03103f;
  font: 8px/12px "Liberation Sans", Arial, sans-serif;
  color: #444;
}
button, input { font: inherit; color: inherit; background: none; border: 0; padding: 0; margin: 0; outline: 0; }
button { display: flex; align-items: center; justify-content: center; white-space: nowrap; }
ul, dl, dd, h2 { margin: 0; padding: 0; list-style: none; }
i { font-style: normal; }
svg { flex: none; overflow: hidden; }
.sprite { position: absolute; width: 0; height: 0; }
.grow { flex: 1; }

.s { fill: none; stroke: #fff; stroke-width: 1.6; }
.s.thin { stroke-width: 1.2; }
.s.fat { stroke-width: 2; }
.f { fill: #fff; }

/* browser chrome */
.tabstrip, .toolbar, .bookmarks, .taskbar { font-family: "Open Sans", "Noto Sans", sans-serif; }
.tabstrip { flex: none; display: flex; height: 19px; margin-left: 2px; background: #0072dc; color: #d9eaff; font-size: 7px; }
.btab { width: 139px; padding: 0 6px; justify-content: flex-start; gap: 4px; border-right: 1px solid #4b9be6; }
.btab svg { width: 10px; height: 10px; }
.btab span { flex: 1; text-align: left; }
.btab b { font-size: 7px; }
.btab.active { width: 145px; padding-left: 11px; background: #fff; color: #444; border-radius: 4px 4px 0 0; border-right: 0; font-size: 8px; }
.newtab { width: 24px; font-size: 13px; color: #fff; }
.winbtns { display: flex; }
.winbtns button { width: 27px; height: 17px; }
.winbtns svg { width: 8px; height: 8px; fill: none; stroke: #a9d2ff; }

.toolbar { flex: none; display: flex; align-items: center; height: 21px; padding: 0 6px 0 10px; font-size: 8px; }
.toolbar button { width: 19px; }
.toolbar button svg { width: 9px; height: 9px; fill: none; stroke: #444; }
.toolbar button.dim svg { stroke: #bbb; }
.omnibox { flex: 1; display: flex; align-items: center; height: 16px; margin-left: 1px; padding: 0 8px 0 3px; background: #f1f3f4; border-radius: 8px; }
.omnibox input { flex: 1; margin-left: 5px; padding-left: 5px; border-left: 1px solid #bbb; line-height: 10px; height: 10px; color: #555; font-family: Roboto, sans-serif; }
.omnibox svg { width: 9px; height: 9px; }
.omnibox .star { margin-left: 10px; }
.warn { margin: 0 4px 0 0; }
.notsecure { color: #c5372c; }
.exts { display: flex; gap: 5px; margin-left: 4px; }
.exts svg { width: 14px; height: 14px; }
.exts .avatar { margin-left: 6px; }

.bookmarks { flex: none; display: flex; align-items: center; height: 19px; padding: 0 8px 2px 9px; font-size: 7px; }
.bookmarks a { display: flex; align-items: center; gap: 4px; color: #444; text-decoration: none; white-space: nowrap; }
.bookmarks svg { width: 11px; height: 11px; }
.w19 { width: 19px; } .w25 { width: 25px; } .w27 { width: 27px; } .w29 { width: 29px; } .w33 { width: 33px; }
.w36 { width: 36px; } .w39 { width: 39px; } .w48 { width: 48px; } .w53 { width: 53px; }
.w54 { width: 54px; } .w55 { width: 55px; } .w59 { width: 59px; } .w75 { width: 75px; } .w78 { width: 78px; }
.w80 { width: 80px; } .w85 { width: 85px; } .w90 { width: 90px; }

/* editor header */
.nrhead { flex: none; display: flex; align-items: center; height: 24px; margin-left: 2px; padding: 0 10px 0 11px; background: #000; color: #ddd; }
.logo { width: 27px; height: 14px; }
.brand { margin-left: 4px; font-size: 9px; }
.deploy { height: 17px; width: 75px; gap: 5px; background: #444; color: #999; }
.deploy svg { width: 18px; height: 12px; }
.deploy i { margin-left: 6px; font-size: 6px; color: #ccc; }
.hbtn { margin-left: 21px; }
.hbtn svg { width: 12px; height: 12px; fill: #ddd; }

/* editor frame */
.editor { flex: 1; min-height: 0; display: flex; margin-left: 2px; }
.palette { width: 105px; display: flex; flex-direction: column; border: solid #bbb; border-width: 0 1px; }
.search { display: flex; align-items: center; gap: 2px; height: 21px; padding-left: 5px; border-bottom: 1px solid #ccc; }
.search svg { width: 8px; height: 8px; }
.search input { width: 80px; }
.search input::placeholder { color: #999; opacity: 1; }
.palbody { flex: 1; min-height: 0; display: flex; }
.cats { flex: 1; overflow: hidden; }
.cats h2 { position: relative; height: 23px; padding-left: 17px; background: #f3f3f3; font-size: 8px; line-height: 23px; color: #333; }
.cats h2::before { content: ""; position: absolute; left: 7px; top: 8px; width: 4px; height: 4px; border: solid #666; border-width: 0 1px 1px 0; transform: rotate(45deg); }
.cats ul { display: grid; align-content: space-between; padding: 10px 12px 10px 11px; }
.cats ul.one { height: 37px; }
.cats ul.common { height: 201px; }
.cats ul.function { min-height: 281px; }
.cats li { position: relative; display: flex; align-items: center; min-height: 17px; border: 1px solid #999; border-radius: 3px; color: #333; line-height: 12px; }
.cats li svg { width: 17px; height: 17px; margin: -1px 0; background: rgba(0, 0, 0, .05); }
.cats li span { position: relative; z-index: 1; flex: 1; text-align: center; padding-left: 1px; }
.cats li.rev { flex-direction: row-reverse; }
.cats li.interval span { padding: 0; white-space: nowrap; }
.cats li.multi { min-height: 29px; }
.cats li.multi svg { height: 29px; background: none; }
.cats li.in::before, .cats li.out::after { content: ""; position: absolute; top: calc(50% - 3px); width: 6px; height: 6px; border: 1px solid #999; border-radius: 2px; background: #d9d9d9; }
.cats li.in::before { left: -4px; }
.cats li.out::after { right: -4px; }
li.subflow { background: #dfa791; } li.inject { background: #a6b8d2; } li.debug { background: #82a576; }
li.complete { background: #b4ebb6; } li.catch { background: #ea8a89; } li.status { background: #82bdd5; }
li.link { background: #d8d8d8; } li.comment { background: #fff; } li.fn { background: #fdc998; }
li.change { background: #ddd25f; } li.template { background: #fbb062; } li.delay { background: #e3ddf7; }
li.exec { background: #ef8e6c; } li.auth { background: #dfdf9c; } li.interval { background: #9fb2c8; } li.multi { background: #dfdc8f; }

.foot { flex: none; display: flex; align-items: center; height: 14px; padding: 0 4px; background: #f4f4f4; border-top: 1px solid #ccc; }
.foot.end { justify-content: flex-end; }
.foot button { width: 11px; height: 11px; background: #fff; border: 1px solid #ddd; }
.foot svg { width: 8px; height: 8px; fill: none; stroke: #666; }
.palette .foot button { transform: rotate(90deg); color: #777; }

.vscroll { flex: none; display: flex; flex-direction: column; width: 8px; background: #f2f2f2; text-align: center; }
.vscroll i, .hscroll i { font-size: 5px; line-height: 8px; color: #444; }
.vscroll b, .hscroll b { background: #bdbdbd; }
.vscroll i:last-child { margin-top: auto; }
.t-pal { height: 62px; }
.t-ws { height: 106px; margin-top: 67px; }
.t-side { height: 333px; margin-top: 193px; }
.hscroll { flex: none; display: flex; height: 10px; background: #f2f2f2; padding-right: 8px; }
.hscroll i { width: 9px; text-align: center; line-height: 10px; }
.hscroll b { width: 217px; }

.workspace { flex: 1; min-width: 0; display: flex; flex-direction: column; border-right: 1px solid #bbb; }
.wtabs { flex: none; display: flex; align-items: flex-end; height: 21px; border-bottom: 1px solid #bbb; }
.arrow { width: 12px; height: 20px; font-size: 7px; color: #555; }
.wtab { width: 81px; height: 19px; margin-right: 4px; padding-left: 6px; justify-content: flex-start; background: #f0f0f0; border: 1px solid #ccc; border-bottom: 0; color: #888; }
.wtab.first { width: 68px; padding-left: 0; border-left: 0; }
.wtab.last { width: 79px; margin-right: 0; }
.wtab.on { height: 20px; margin-bottom: -1px; background: #fff; color: #333; font-weight: bold; }
.sq { width: 18px; height: 17px; margin: 0 1px 1px 3px; border: 1px solid #ccc; background: #fff; }
.sq svg { width: 9px; height: 9px; }
.wtabs .sq { height: 18px; }
.canvaswrap { flex: 1; min-height: 0; display: flex; }
.canvas { flex: 1; min-width: 0; }
.wires path { fill: none; stroke: #8c8c8c; stroke-width: 1.5; }
.port { fill: #d9d9d9; stroke: #a2a2a2; }
.shade { fill: #000; opacity: .05; }
.node .box { stroke: #a2a2a2; }
.node .s, .canvas .f { opacity: .85; }
.node text { fill: #333; font-size: 8px; }
.node.it text { font-style: italic; }
.node .tray { fill: #eee; stroke: #a2a2a2; }
.node.fn { fill: #fdc891; } .node.tpl { fill: #35a0b2; } .node.delay { fill: #e0dbf5; } .node.ui { fill: #9fd6de; }
.node.link { fill: #d2d2d2; } .node.inject { fill: #a3b6d1; } .node.comment { fill: #fff; } .node.change { fill: #ddd462; }
.node.mqtt { fill: #d6bfd9; } .node.subflow { fill: #e5a58a; }
.node.tpl text { fill: #12434d; }
.node.subflow .box { stroke: #e28743; }
.stat rect { fill: #459579; }
.stat text { fill: #888; font-size: 7px; }

.splitter { flex: none; width: 6px; display: flex; align-items: center; justify-content: center; background: #f3f3f3; border-right: 1px solid #bbb; }
.splitter b { width: 2px; height: 30px; background: #bbb; }

/* context sidebar */
.sidebar { width: 353px; display: flex; flex-direction: column; }
.stabs { flex: none; display: flex; align-items: flex-end; height: 21px; border-bottom: 1px solid #bbb; }
.stab { width: 118px; height: 20px; margin-bottom: -1px; padding-left: 8px; gap: 2px; justify-content: flex-start; background: #fff; border: 1px solid #bbb; border-bottom: 0; font-weight: bold; color: #333; }
.stab svg { width: 9px; height: 9px; }
.stabs .sq { margin-right: 0; margin-left: 2px; }
.sq.sel { background: #ddd; border-color: #aaa; }
.more { width: 21px; height: 18px; font-size: 5px; }
.sidebody { flex: 1; min-height: 0; display: flex; overflow: hidden; }
.ctx { flex: 1; display: grid; grid-template-columns: 94px 1fr; grid-template-rows: minmax(0, 1fr) 18px 17px 18px; margin: -6px 0 3px; }
.ctx dt { padding: 1px 0 0 3px; background: #f7f7f7; border-bottom: 1px solid #e8e8e8; border-right: 1px solid #eee; }
.ctx dd { border-bottom: 1px solid #eee; min-height: 0; }
.tree { height: 100%; display: grid; grid-auto-rows: minmax(0, 1fr); color: #77438a; }
.tree li { display: flex; align-items: center; white-space: pre; }
.tree em, .val em { color: #666; }
.tree q { color: #b03a3f; quotes: '"' '"'; }
.tree i, .val i { display: inline-block; width: 0; height: 0; margin-right: 3px; border: solid transparent; border-width: 2px 0 2px 3px; border-left-color: #555; }
.tree .open i { margin-right: 2px; border-width: 3px 2px 0; border-top-color: #555; border-left-color: transparent; margin-left: -1px; }
.l0 { padding-left: 8px; }
.l1 { padding-left: 26px; }
.tree .l2 { padding-left: 34px; }
.l3 { margin-left: 48px; }
.hover { background: #f2f2f2; }
.hover button { width: 10px; height: 10px; margin: 0 3px 0 auto; background: #fff; border: 1px solid #ccc; }
.hover svg { width: 6px; height: 6px; }
.val { padding: 3px 0 0 7px; color: #77438a; }
.val i { margin-right: 4px; }
.val s { text-decoration: none; color: #444; }
.val.num { padding-left: 5px; color: #2b3b9c; }

/* taskbar */
.taskbar { flex: none; display: flex; height: 25px; background: #06233b; border-bottom: 1px solid #000; color: #dfe7ee; font-size: 7px; }
.start { width: 35px; }
.start svg { width: 18px; height: 18px; }
.task { height: 24px; margin-right: 1px; padding-left: 2px; gap: 3px; justify-content: flex-start; overflow: hidden; border-bottom: 1px solid transparent; }
.task svg { width: 14px; height: 14px; }
.task.icon { justify-content: center; padding: 0; }
.task.run { border-color: #84bdec; }
.task.cur { background: #0a4d95; }
.task.alt { background: #24405a; }
.tray-icons { display: flex; align-items: center; gap: 7px; }
.tray-icons svg { width: 12px; height: 12px; }
.o { fill: none; stroke: #ccd6df; }
.clock { display: flex; flex-direction: column; justify-content: center; width: 40px; text-align: center; line-height: 10px; }
.notify { width: 30px; margin-right: 4px; }
.notify svg { width: 11px; height: 11px; }
```
